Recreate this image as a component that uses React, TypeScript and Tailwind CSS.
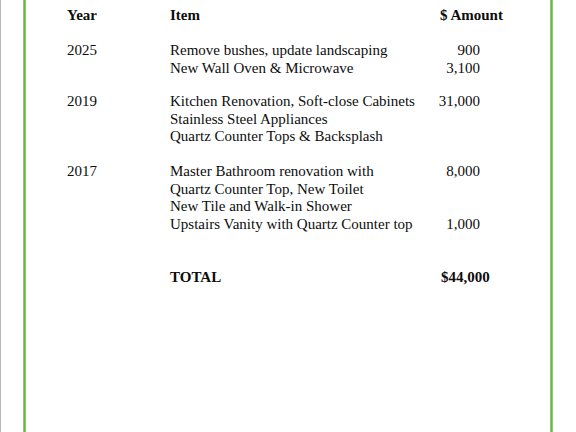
import React from "react";

const rows = [
  { year: "2025", items: [["Remove bushes, update landscaping", "900"], ["New Wall Oven & Microwave", "3,100"]], mt: "mt-[18px]" },
  { year: "2019", items: [["Kitchen Renovation, Soft-close Cabinets", "31,000"], ["Stainless Steel Appliances", ""], ["Quartz Counter Tops & Backsplash", ""]], mt: "mt-[16px]" },
  { year: "2017", items: [["Master Bathroom renovation with", "8,000"], ["Quartz Counter Top, New Toilet", ""], ["New Tile and Walk-in Shower", ""], ["Upstairs Vanity with Quartz Counter top", "1,000"]], mt: "mt-[17.5px]" },
];

export default function App() {
  return (
    <div
      className="w-[576px] h-[432px] bg-white flex overflow-hidden text-[#0d0d0d]"
      style={{ fontFamily: '"Liberation Serif", "Times New Roman", serif' }}
    >
      <div className="w-[1px] bg-[#b8b8b8]" />
      <div className="w-[22px]" />
      <div className="w-[3px] bg-[#6fb448] border-x border-[#8fc870]" />
      <div className="flex-1 pl-[41px] pt-[6.5px] text-[15px] leading-[17.5px]">
        <div className="grid grid-cols-[103px_230px_80px] font-bold">
          <div>Year</div>
          <div>Item</div>
          <div className="pl-[40px] whitespace-nowrap">$ Amount</div>
        </div>
        {rows.map((r) => (
          <div key={r.year} className={`grid grid-cols-[103px_230px_80px] ${r.mt}`}>
            <div>{r.year}</div>
            <div className="col-span-2 flex flex-col">
              {r.items.map(([t, a], i) => (
                <div key={i} className="grid grid-cols-[230px_80px]">
                  <div className="whitespace-nowrap">{t}</div>
                  <div className="text-right">{a}</div>
                </div>
              ))}
            </div>
          </div>
        ))}
        <div className="grid grid-cols-[103px_230px_80px] font-bold mt-[35.5px]">
          <div />
          <div>TOTAL</div>
          <div className="pl-[41px]">$44,000</div>
        </div>
      </div>
      <div className="w-[3px] bg-[#6fb448] border-x border-[#8fc870]" />
      <div className="w-[23px]" />
    </div>
  );
}
